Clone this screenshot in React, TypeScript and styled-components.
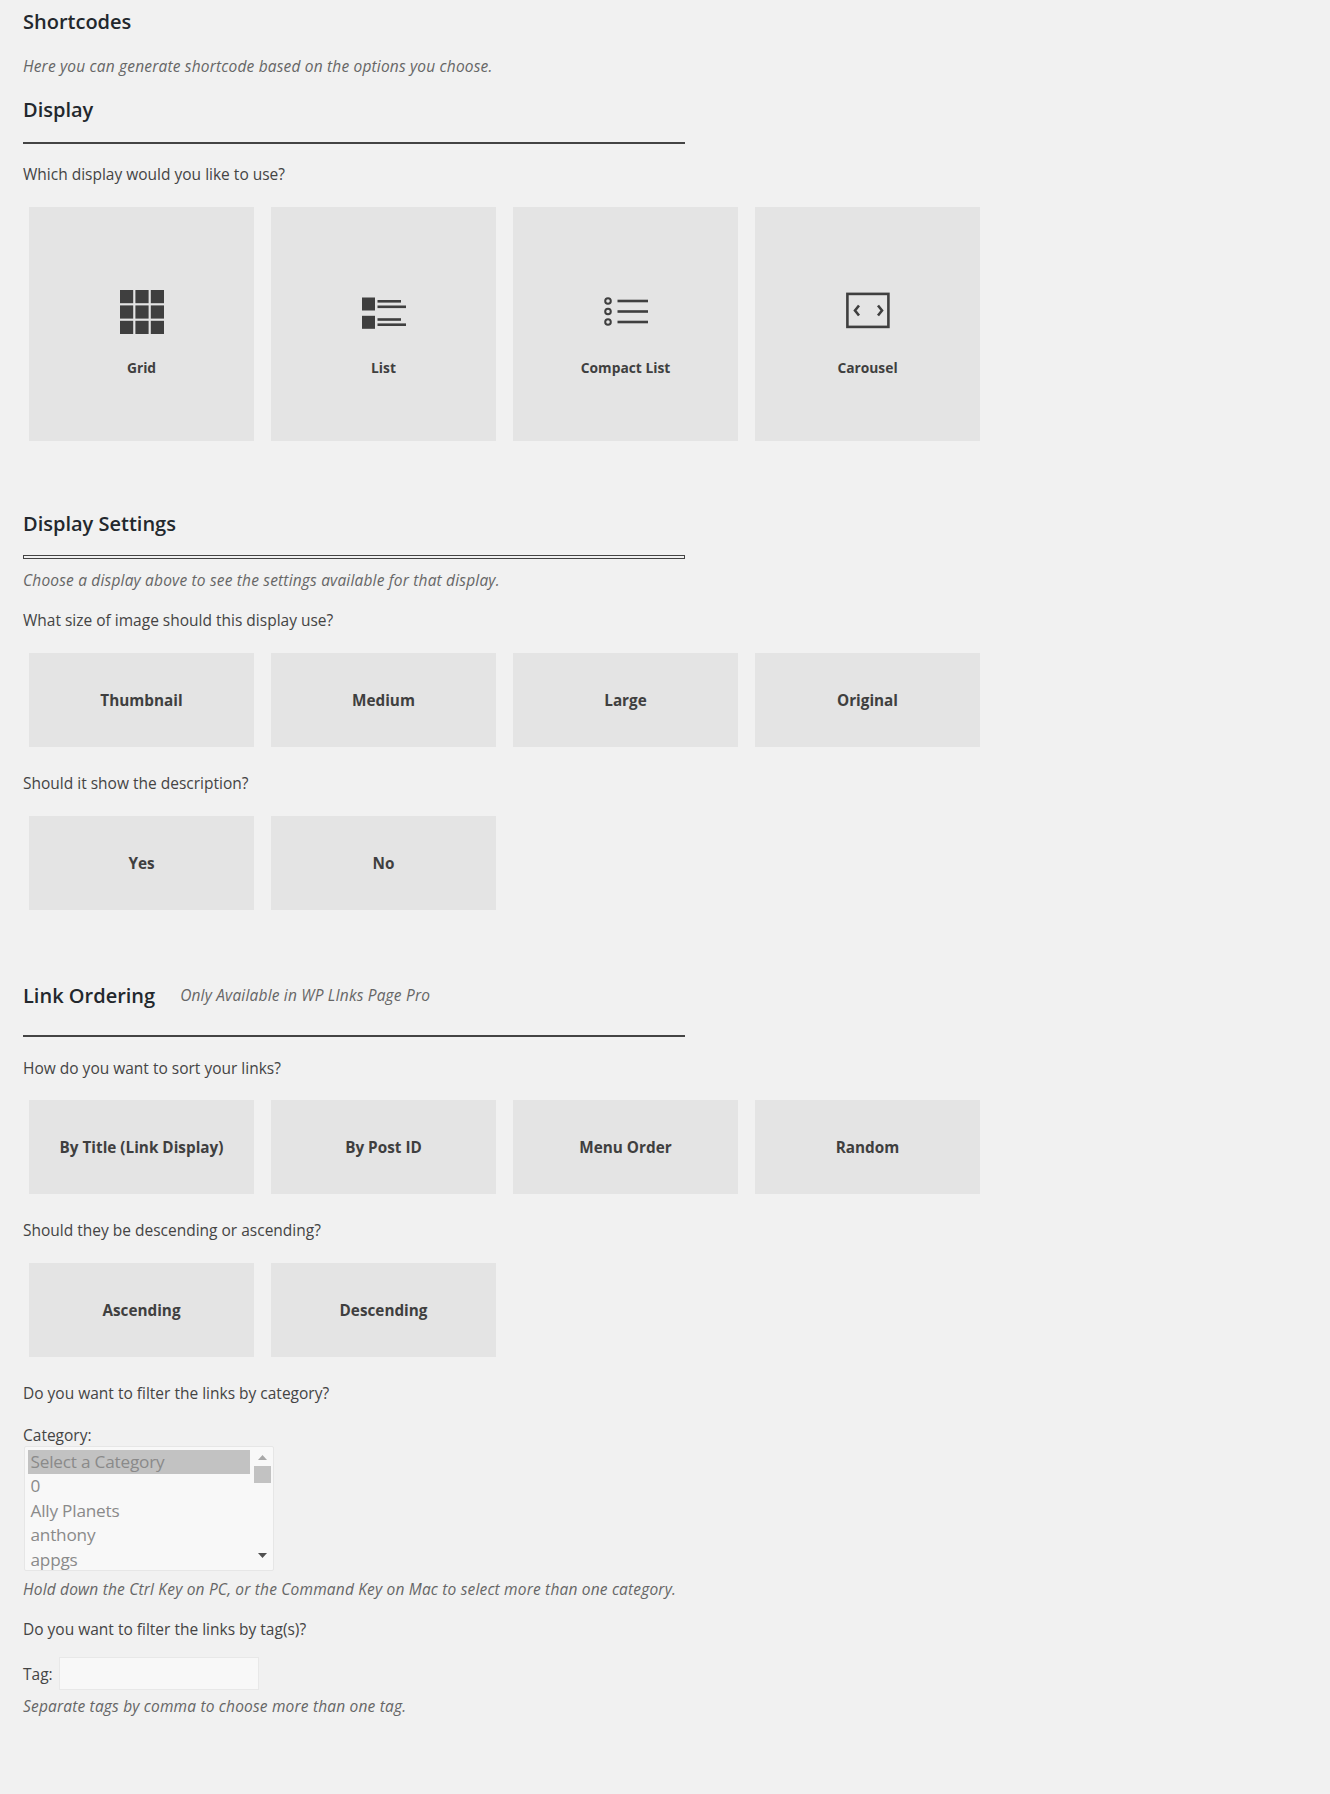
import React from "react";
import styled, { createGlobalStyle } from "styled-components";

const Global = createGlobalStyle`
  html, body { margin: 0; padding: 0; background: #f1f1f1; }
  body { font-family: "Open Sans", "Liberation Sans", sans-serif; color: #444; }
`;

const Page = styled.div`
  width: 1330px;
  height: 1794px;
  box-sizing: border-box;
  padding: 8px 0 0 23px;
  overflow: hidden;
`;

const Title = styled.h2<{ $top?: number }>`
  margin: ${(p) => p.$top ?? 0}px 0 0;
  font-size: 20px;
  line-height: 28px;
  font-weight: 600;
  color: #23282d;
`;

const TitleRow = styled.div<{ $top: number }>`
  display: flex;
  align-items: center;
  gap: 25px;
  margin-top: ${(p) => p.$top}px;
`;

const Note = styled.p<{ $top?: number; $raised?: boolean }>`
  margin: ${(p) => p.$top ?? 0}px 0 ${(p) => (p.$raised ? 3 : 0)}px;
  font-size: 15.5px;
  line-height: 20px;
  font-style: italic;
  color: #666;
  letter-spacing: 0.18px;
`;

const Question = styled.p<{ $top?: number }>`
  margin: ${(p) => p.$top ?? 0}px 0 0;
  font-size: 15.5px;
  line-height: 20px;
  color: #444;
`;

const Rule = styled.hr<{ $top: number; $double?: boolean }>`
  width: 662px;
  height: ${(p) => (p.$double ? 4 : 2)}px;
  box-sizing: border-box;
  margin: ${(p) => p.$top}px 0 0;
  background: ${(p) => (p.$double ? "#f1f1f1" : "#444")};
  border: ${(p) => (p.$double ? "1px solid #444" : "0")};
`;

const Cards = styled.div<{ $top: number }>`
  display: flex;
  gap: 17px;
  margin: ${(p) => p.$top}px 0 0 6px;
`;

const Card = styled.div<{ $tall?: boolean }>`
  width: 225px;
  height: ${(p) => (p.$tall ? 234 : 94)}px;
  box-sizing: border-box;
  display: flex;
  flex-direction: column;
  align-items: center;
  justify-content: ${(p) => (p.$tall ? "flex-start" : "center")};
  padding-top: ${(p) => (p.$tall ? 83 : 0)}px;
  background: #e4e4e4;
  font-size: ${(p) => (p.$tall ? 13.8 : 15.3)}px;
  font-weight: 700;
  color: #3f3f3f;
`;

const CardIcon = styled.svg`
  width: 44px;
  height: 44px;
  display: block;
  fill: #3f3f3f;
  stroke: none;
  margin-bottom: 23px;
`;

const CardLabel = styled.span`
  line-height: 22px;
`;

const FieldLabel = styled.div<{ $top: number }>`
  margin-top: ${(p) => p.$top}px;
  font-size: 15.5px;
  line-height: 20px;
  color: #444;
`;

const ListBox = styled.div`
  width: 250px;
  height: 125px;
  box-sizing: border-box;
  margin: 1px 0 0 1px;
  display: flex;
  padding: 3px 2px 0 3px;
  background: #f8f8f8;
  border: 1px solid #e6e6e6;
  border-radius: 2px;
  overflow: hidden;
`;

const Options = styled.div`
  width: 222px;
  flex: none;
`;

const Option = styled.div<{ $selected?: boolean }>`
  height: 24.4px;
  line-height: 24px;
  padding-left: 2.5px;
  font-size: 17.2px;
  color: #8a8a8a;
  letter-spacing: -0.2px;
  white-space: nowrap;
  background: ${(p) => (p.$selected ? "#c2c2c2" : "transparent")};
`;

const ScrollBar = styled.div`
  flex: 1;
  display: flex;
  flex-direction: column;
  align-items: center;
  margin-left: 4px;
  padding-top: 5px;
`;

const ScrollArrow = styled.svg<{ $muted?: boolean }>`
  width: 9px;
  height: 5px;
  display: block;
  fill: ${(p) => (p.$muted ? "#a8a8a8" : "#505050")};
`;

const ScrollThumb = styled.div`
  width: 17px;
  height: 17px;
  margin: 6px 0 70px;
  background: #c2c2c2;
`;

const TagRow = styled.div`
  display: flex;
  align-items: center;
  gap: 6px;
  margin-top: 18px;
  font-size: 15.5px;
  color: #444;
`;

const TagInput = styled.input`
  width: 200px;
  height: 33px;
  box-sizing: border-box;
  padding: 0;
  background: #f8f8f8;
  border: 1px solid #e8e8e8;
  outline: none;
`;

const GridIcon = () => (
  <CardIcon viewBox="0 0 44 44">
    {[0, 15.4, 30.8].flatMap((y) =>
      [0, 15.4, 30.8].map((x) => <rect key={`${x}-${y}`} x={x} y={y} width="13.2" height="13.2" />)
    )}
  </CardIcon>
);

const ListIcon = () => (
  <CardIcon viewBox="0 0 44 44">
    <rect x="0" y="7.5" width="13" height="13" />
    <rect x="15.5" y="10" width="23.5" height="2.6" />
    <rect x="15.5" y="15.5" width="28.5" height="2.6" />
    <rect x="0" y="25.8" width="13" height="13" />
    <rect x="15.5" y="28.2" width="23.5" height="2.6" />
    <rect x="15.5" y="33.4" width="28.5" height="2.6" />
  </CardIcon>
);

const CompactIcon = () => (
  <CardIcon viewBox="0 0 44 44">
    {[11, 21.5, 32].map((y) => (
      <g key={y}>
        <circle cx="4" cy={y} r="2.8" fill="none" stroke="#3f3f3f" strokeWidth="2" />
        <rect x="13.5" y={y - 1.3} width="31" height="2.6" />
      </g>
    ))}
  </CardIcon>
);

const CarouselIcon = () => (
  <CardIcon viewBox="0 0 44 44">
    <rect x="1.4" y="3.9" width="41" height="33" fill="none" stroke="#3f3f3f" strokeWidth="2.6" />
    <path d="M13 15.5 L9 20.5 L13 25.5" fill="none" stroke="#3f3f3f" strokeWidth="2.6" />
    <path d="M32 15.5 L36 20.5 L32 25.5" fill="none" stroke="#3f3f3f" strokeWidth="2.6" />
  </CardIcon>
);

const displays = [
  { label: "Grid", icon: <GridIcon /> },
  { label: "List", icon: <ListIcon /> },
  { label: "Compact List", icon: <CompactIcon /> },
  { label: "Carousel", icon: <CarouselIcon /> },
];

const CardRow = ({ top, items }: { top: number; items: string[] }) => (
  <Cards $top={top}>
    {items.map((item) => (
      <Card key={item}>
        <CardLabel>{item}</CardLabel>
      </Card>
    ))}
  </Cards>
);

export default function App() {
  return (
    <Page>
      <Global />
      <Title>Shortcodes</Title>
      <Note $top={20}>Here you can generate shortcode based on the options you choose.</Note>
      <Title $top={20}>Display</Title>
      <Rule $top={18} />
      <Question $top={20}>Which display would you like to use?</Question>
      <Cards $top={23}>
        {displays.map((d) => (
          <Card $tall key={d.label}>
            {d.icon}
            <CardLabel>{d.label}</CardLabel>
          </Card>
        ))}
      </Cards>

      <Title $top={69}>Display Settings</Title>
      <Rule $top={17} $double />
      <Note $top={11}>Choose a display above to see the settings available for that display.</Note>
      <Question $top={20}>What size of image should this display use?</Question>
      <CardRow top={23} items={["Thumbnail", "Medium", "Large", "Original"]} />
      <Question $top={26}>Should it show the description?</Question>
      <CardRow top={23} items={["Yes", "No"]} />

      <TitleRow $top={72}>
        <Title>Link Ordering</Title>
        <Note $raised>Only Available in WP LInks Page Pro</Note>
      </TitleRow>
      <Rule $top={25} />
      <Question $top={21}>How do you want to sort your links?</Question>
      <CardRow top={22} items={["By Title (Link Display)", "By Post ID", "Menu Order", "Random"]} />
      <Question $top={26}>Should they be descending or ascending?</Question>
      <CardRow top={23} items={["Ascending", "Descending"]} />
      <Question $top={26}>Do you want to filter the links by category?</Question>
      <FieldLabel $top={22}>Category:</FieldLabel>
      <ListBox>
        <Options>
          <Option $selected>Select a Category</Option>
          <Option>0</Option>
          <Option>Ally Planets</Option>
          <Option>anthony</Option>
          <Option>appgs</Option>
        </Options>
        <ScrollBar>
          <ScrollArrow $muted viewBox="0 0 9 5">
            <path d="M4.5 0 L9 5 H0 Z" />
          </ScrollArrow>
          <ScrollThumb />
          <ScrollArrow viewBox="0 0 9 5">
            <path d="M0 0 H9 L4.5 5 Z" />
          </ScrollArrow>
        </ScrollBar>
      </ListBox>
      <Note $top={8}>Hold down the Ctrl Key on PC, or the Command Key on Mac to select more than one category.</Note>
      <Question $top={20}>Do you want to filter the links by tag(s)?</Question>
      <TagRow>
        <span>Tag:</span>
        <TagInput type="text" />
      </TagRow>
      <Note $top={6}>Separate tags by comma to choose more than one tag.</Note>
    </Page>
  );
}
